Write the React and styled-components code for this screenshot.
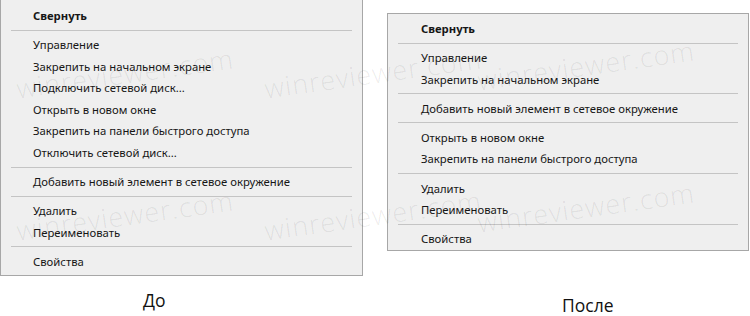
import React from 'react'
import styled, { createGlobalStyle } from 'styled-components'

const GlobalStyle = createGlobalStyle`
  html, body {
    margin: 0;
    padding: 0;
    background: #ffffff;
  }
  body {
    font-family: "Noto Sans", "Open Sans", sans-serif;
    width: 750px;
    height: 316px;
    overflow: hidden;
  }
`

const Page = styled.div`
  position: relative;
  display: flex;
  align-items: flex-start;
  width: 750px;
  height: 316px;
  overflow: hidden;
`

const Column = styled.div`
  display: flex;
  flex-direction: column;
  width: ${p => p.width}px;
  margin-left: ${p => p.offsetLeft || 0}px;
  padding-top: ${p => p.offsetTop || 0}px;
`

const Menu = styled.div`
  box-sizing: border-box;
  background: #efefef;
  border: 1px solid #a7a7a7;
  border-top: ${p => (p.cutTop ? 'none' : '1px solid #a7a7a7')};
  padding: ${p => p.topPad}px 0 ${p => p.bottomPad}px 0;
  display: flex;
  flex-direction: column;
`

const Item = styled.div`
  height: 21.6px;
  line-height: 21.6px;
  padding-left: ${p => p.indent}px;
  font-size: 11.3px;
  color: #161616;
  font-weight: ${p => (p.bold ? 700 : 400)};
  white-space: nowrap;
`

const Separator = styled.div`
  height: 1px;
  margin: 3px 10px 3.5px 10px;
  background: #c4c4c4;
`

const WatermarkLayer = styled.div`
  position: absolute;
  inset: 0;
  pointer-events: none;
`

const Watermark = styled.div`
  position: absolute;
  left: ${p => p.x}px;
  top: ${p => p.y}px;
  font-family: "Open Sans", "Noto Sans", sans-serif;
  font-size: 27px;
  font-weight: 300;
  letter-spacing: 1px;
  color: rgba(0, 0, 0, 0.08);
  transform: rotate(-8deg);
  transform-origin: left top;
  white-space: nowrap;
`

const Caption = styled.div`
  margin-top: ${p => p.gap}px;
  padding-left: ${p => p.shift}px;
  font-family: "Open Sans", "Noto Sans", sans-serif;
  font-size: 17.5px;
  color: #111111;
  line-height: 18px;
`

const before = [
  { label: 'Свернуть', bold: true },
  'sep',
  'Управление',
  'Закрепить на начальном экране',
  'Подключить сетевой диск...',
  'Открыть в новом окне',
  'Закрепить на панели быстрого доступа',
  'Отключить сетевой диск...',
  'sep',
  'Добавить новый элемент в сетевое окружение',
  'sep',
  'Удалить',
  'Переименовать',
  'sep',
  'Свойства',
]

const after = [
  { label: 'Свернуть', bold: true },
  'sep',
  'Управление',
  'Закрепить на начальном экране',
  'sep',
  'Добавить новый элемент в сетевое окружение',
  'sep',
  'Открыть в новом окне',
  'Закрепить на панели быстрого доступа',
  'sep',
  'Удалить',
  'Переименовать',
  'sep',
  'Свойства',
]

const ContextMenu = ({ items, indent, cutTop, topPad, bottomPad }) => (
  <Menu cutTop={cutTop} topPad={topPad} bottomPad={bottomPad}>
    {items.map((it, i) => {
      if (it === 'sep') return <Separator key={i} />
      if (typeof it === 'string') return <Item key={i} indent={indent}>{it}</Item>
      return <Item key={i} indent={indent} bold={it.bold}>{it.label}</Item>
    })}
  </Menu>
)

// faint site watermark laid over the whole screenshot
const marks = [
  { x: 14, y: 70 },
  { x: 262, y: 70 },
  { x: 475, y: 62 },
  { x: 14, y: 212 },
  { x: 262, y: 212 },
  { x: 475, y: 204 },
]

const App = () => (
  <>
    <GlobalStyle />
    <Page>
      <Column width={363}>
        <ContextMenu items={before} indent={32} cutTop topPad={5} bottomPad={2} />
        <Caption gap={15} shift={143}>До</Caption>
      </Column>
      <Column width={362} offsetLeft={24} offsetTop={13}>
        <ContextMenu items={after} indent={33} topPad={4} bottomPad={0} />
        <Caption gap={45} shift={175}>После</Caption>
      </Column>
      <WatermarkLayer>
        {marks.map((m, i) => (
          <Watermark key={i} x={m.x} y={m.y}>winreviewer.com</Watermark>
        ))}
      </WatermarkLayer>
    </Page>
  </>
)

export default App
